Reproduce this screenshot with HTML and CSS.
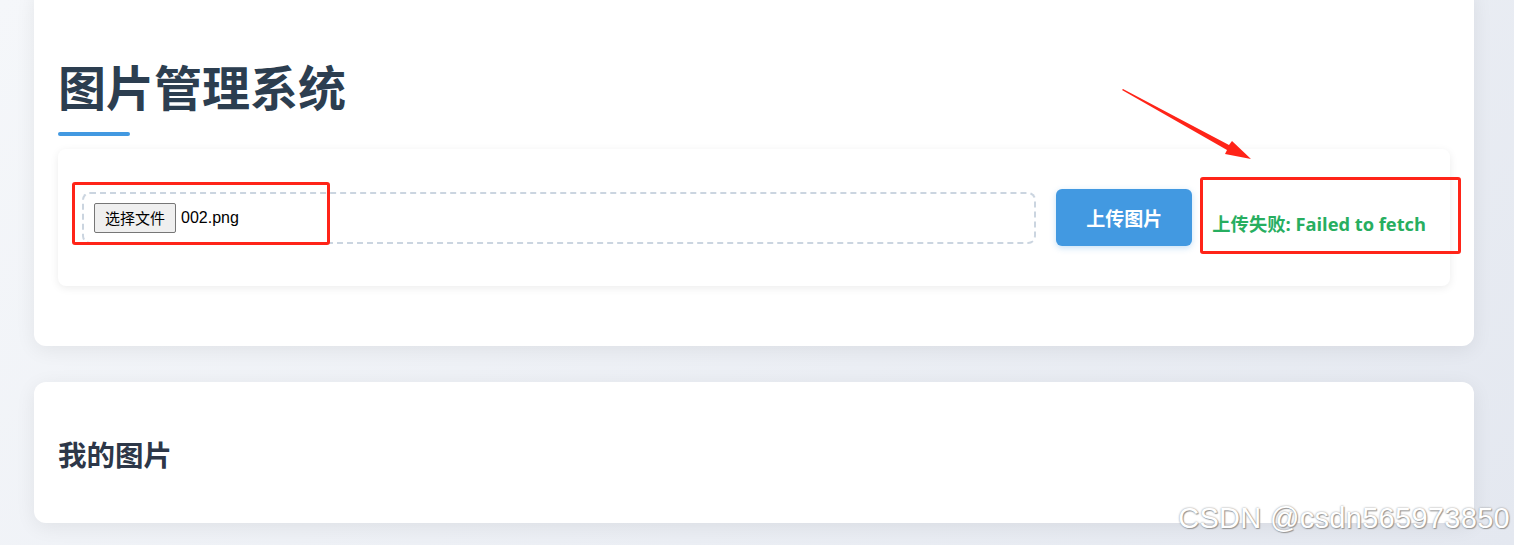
FILE: index.html
```html
<!DOCTYPE html>
<html lang="zh-CN">
<head>
    <meta charset="UTF-8">
    <meta name="viewport" content="width=device-width, initial-scale=1.0">
    <title>图片管理系统</title>
    <link rel="stylesheet" href="styles.css">
</head>
<body>
    <div class="container">
        <div class="card main-card">
            <h1>图片管理系统</h1>
            <div class="upload-section">
                <div class="file-box">
                    <button class="file-btn" type="button">选择文件</button>
                    <span class="file-name">002.png</span>
                </div>
                <button class="upload-btn" type="button">上传图片</button>
                <div class="status">上传失败: Failed to fetch</div>
            </div>
        </div>

        <div class="card list-card">
            <h2>我的图片</h2>
        </div>
    </div>

    <!-- annotations drawn on top of the screenshot -->
    <div class="mark mark-file"></div>
    <div class="mark mark-status"></div>
    <svg class="arrow" width="160" height="90" viewBox="0 0 160 90">
        <polygon points="2,2 108,58 111,54 130,72 104,67 106,63 1,3" fill="#ff2418"/>
    </svg>

    <div class="watermark">CSDN @csdn565973850</div>
</body>
</html>
```

FILE: styles.css
```css
body {
    font-family: "Liberation Sans", "Noto Sans CJK SC", sans-serif;
    background: linear-gradient(135deg, #f5f7fa 0%, #e4e8f0 100%);
    margin: 0;
    min-height: 545px;
    overflow: hidden;
}
.container {
    padding: 0 40px 0 34px;
}
.card {
    background: #fff;
    border-radius: 12px;
    box-shadow: 0 4px 20px rgba(0, 0, 0, 0.07);
    padding: 24px;
}
.main-card {
    margin-top: -12px;
    margin-bottom: 36px;
}
h1 {
    font-family: "Noto Sans CJK SC", sans-serif;
    font-size: 48px;
    line-height: 58px;
    color: #2c3e50;
    margin: 44px 0 13px;
    font-weight: 700;
}
h1::after {
    content: "";
    display: block;
    width: 72px;
    height: 4px;
    margin-top: 18px;
    background: #4299e1;
    border-radius: 2px;
}
.upload-section {
    display: flex;
    align-items: center;
    gap: 20px;
    padding: 40px 24px;
    border-radius: 8px;
    background: #fff;
    box-shadow: 0 2px 8px rgba(0, 0, 0, 0.08);
    margin-bottom: 36px;
}
.file-box {
    flex: 1;
    display: flex;
    align-items: center;
    border: 2px dashed #cbd5e0;
    border-radius: 8px;
    padding: 9px 10px;
}
.file-btn {
    font-family: "Noto Sans CJK SC", sans-serif;
    font-size: 15px;
    height: 30px;
    padding: 0 10px;
    background: #efefef;
    border: 1px solid #767676;
    border-radius: 2px;
    color: #000;
}
.file-name {
    font-size: 16px;
    color: #000;
    margin-left: 5px;
}
.upload-btn {
    font-family: "Noto Sans CJK SC", sans-serif;
    font-size: 19px;
    font-weight: 700;
    line-height: 25px;
    padding: 16px 30px;
    background: #4299e1;
    color: #fff;
    border: none;
    border-radius: 6px;
    box-shadow: 0 2px 6px rgba(66, 153, 225, 0.3);
    cursor: pointer;
}
.status {
    flex-shrink: 0;
    margin-top: 11px;
    font-family: "Open Sans", "Noto Sans CJK SC", sans-serif;
    font-size: 18.3px;
    font-weight: 700;
    color: #27ae60;
}
.list-card {
    padding-top: 24px;
    padding-bottom: 24px;
}
h2 {
    font-family: "Noto Sans CJK SC", sans-serif;
    font-size: 28.5px;
    line-height: 34px;
    color: #2d3748;
    margin: 31px 0 28px;
}
.mark {
    position: absolute;
    border: 3px solid #ff2418;
    border-radius: 3px;
}
.mark-file {
    left: 72px;
    top: 182px;
    width: 252px;
    height: 57px;
}
.mark-status {
    left: 1200px;
    top: 177px;
    width: 255px;
    height: 71px;
}
.arrow {
    position: absolute;
    left: 1121px;
    top: 87px;
}
.watermark {
    position: absolute;
    right: 4px;
    bottom: 10px;
    font-family: "Liberation Sans", sans-serif;
    font-size: 29px;
    color: #fff;
    text-shadow: 0 0 2px #8a8a8a, 1px 1px 1px #9a9a9a;
    letter-spacing: 0.3px;
}
```
